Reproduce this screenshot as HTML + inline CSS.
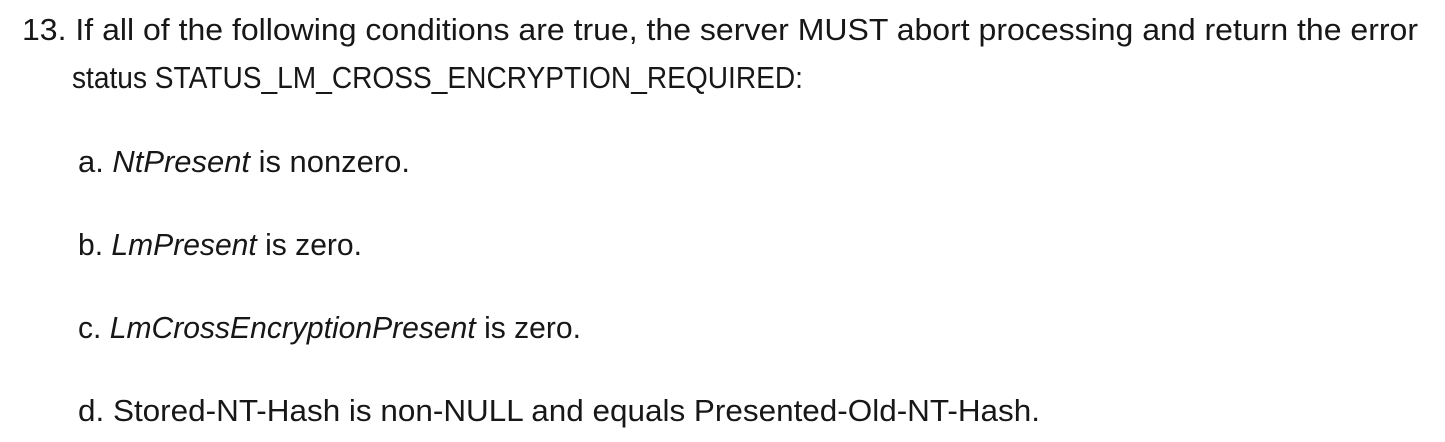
<!DOCTYPE html>
<html><head><meta charset="utf-8"><style>
html,body{margin:0;padding:0;background:#fff;width:1445px;height:442px;overflow:hidden}
svg{display:block}
text{font-family:"Liberation Sans",sans-serif;font-size:31px;fill:#171717}
</style></head><body>
<svg width="1445" height="442" xmlns="http://www.w3.org/2000/svg">
<text x="22" y="40" textLength="1396" lengthAdjust="spacingAndGlyphs">13. If all of the following conditions are true, the server MUST abort processing and return the error</text>
<text x="72" y="88" textLength="731" lengthAdjust="spacingAndGlyphs">status STATUS_LM_CROSS_ENCRYPTION_REQUIRED:</text>
<text x="78" y="172" textLength="332" lengthAdjust="spacingAndGlyphs">a. <tspan font-style="italic">NtPresent</tspan> is nonzero.</text>
<text x="78" y="255" textLength="284" lengthAdjust="spacingAndGlyphs">b. <tspan font-style="italic">LmPresent</tspan> is zero.</text>
<text x="78" y="338" textLength="503" lengthAdjust="spacingAndGlyphs">c. <tspan font-style="italic">LmCrossEncryptionPresent</tspan> is zero.</text>
<text x="78" y="421" textLength="962" lengthAdjust="spacingAndGlyphs">d. Stored-NT-Hash is non-NULL and equals Presented-Old-NT-Hash.</text>
</svg>
</body></html>
